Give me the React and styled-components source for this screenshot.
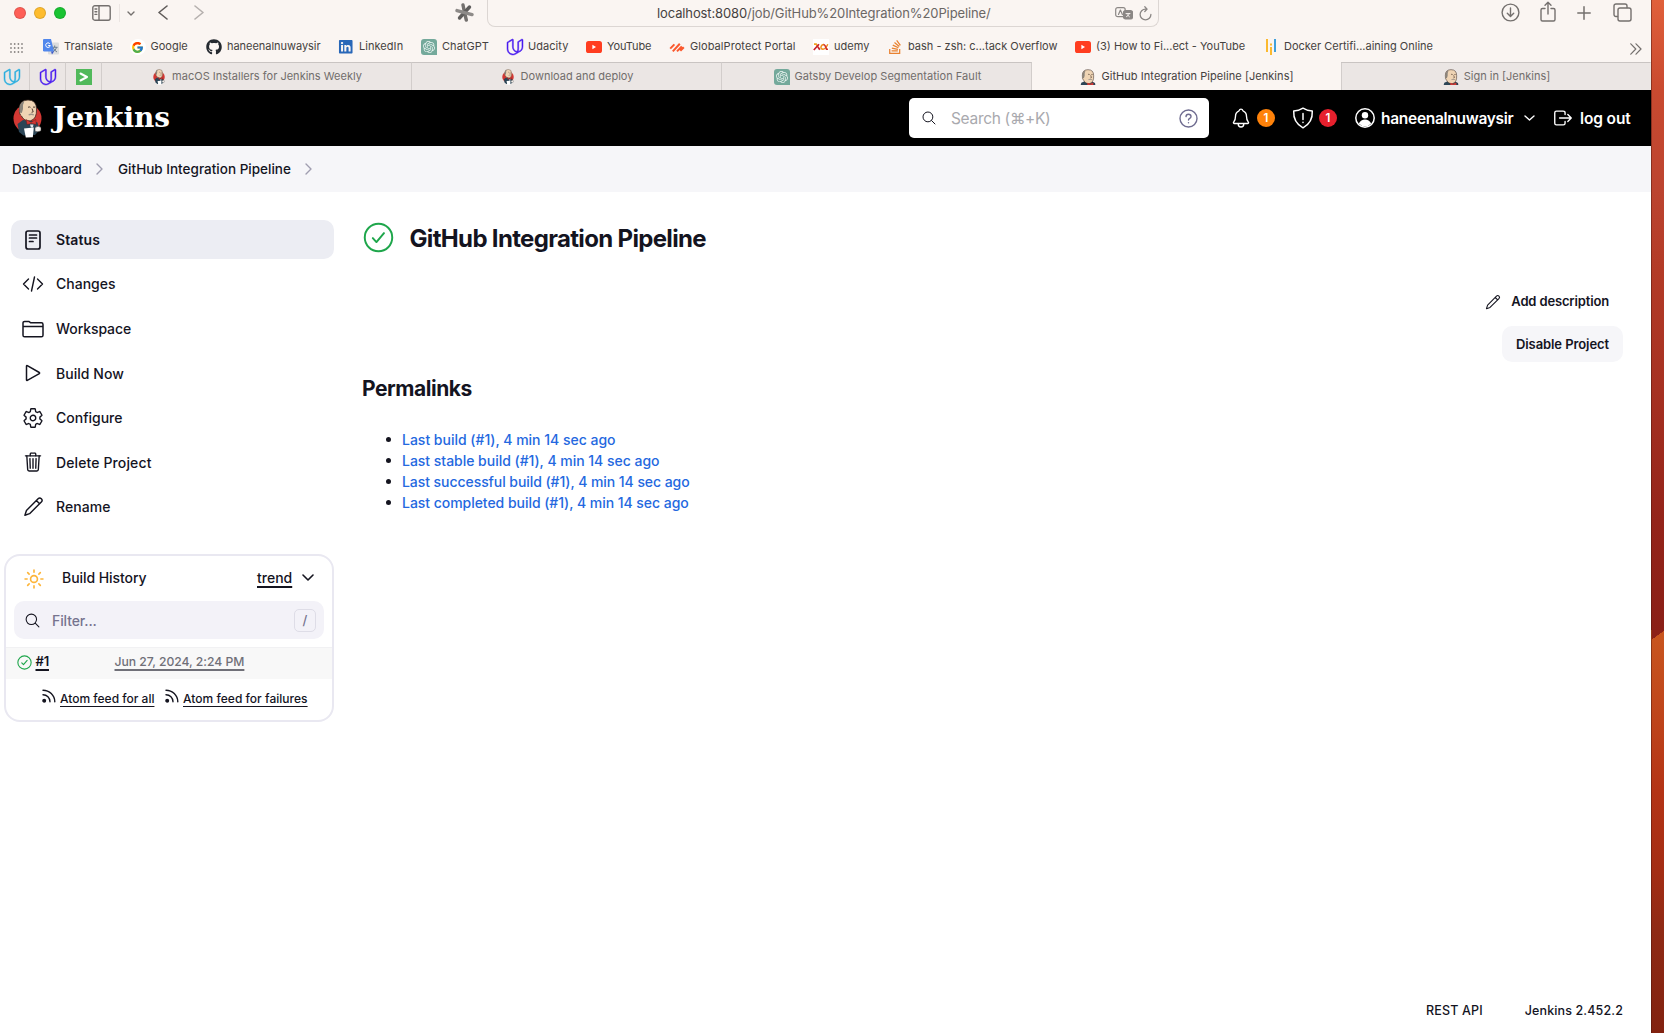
import React from "react";
import styled, { createGlobalStyle } from "styled-components";
import { FcGoogle } from "react-icons/fc";
import { FaGithub, FaLinkedin } from "react-icons/fa";
import { SiStackoverflow, SiOpenai, SiUdacity } from "react-icons/si";
import {
  IoSearchOutline, IoSettingsOutline, IoTrashOutline, IoNotificationsOutline,
  IoSunnyOutline, IoLogOutOutline,
} from "react-icons/io5";

const Global = createGlobalStyle`
  * { box-sizing: border-box; }
  body { margin: 0; background: #fff; font-family: Inter, "Noto Sans", sans-serif; color: #14141f; }
  svg { display: block; flex: none; }
`;

const Desktop = styled.div`
  display: flex; width: 1664px; height: 1033px; overflow: hidden;
`;
const Win = styled.div`
  width: 1651px; height: 1033px; display: flex; flex-direction: column; background: #fff; flex: none;
`;
const Wallpaper = styled.div`
  flex: 1;
  border-left: 1px solid rgba(70, 20, 10, 0.45);
  background:
    linear-gradient(144deg, #8c2018 0 50%, transparent 51%) 0 630px / 100% 10px no-repeat,
    linear-gradient(#e0603a 0, #c94a30 90px, #bc4430 190px, #b33b27 270px, #a63122 390px, #94241a 520px, #8a1f17 630px,
      #c9561f 630px, #be441b 720px, #b43416 790px, #a42d14 870px, #8f2a15 930px, #822210 1033px);
`;
const T = styled.span`
  white-space: nowrap;
  font-size: ${(p) => p.$s}px;
  font-weight: ${(p) => p.$w || 400};
  letter-spacing: ${(p) => p.$ls || 0}px;
  color: ${(p) => p.$c || "inherit"};
  line-height: ${(p) => p.$lh || 1.25};
`;

/* Safari chrome */
const Toolbar = styled.div`
  height: 27px; background: #faf5f2; display: flex; align-items: flex-start; flex: none;
`;
const Slot = styled.div`
  width: ${(p) => p.$w}px; padding-left: ${(p) => p.$l || 0}px; padding-top: ${(p) => p.$t || 0}px; flex: none; display: flex;
`;
const Lights = styled.div`
  display: flex; gap: 8px; padding: 7px 0 0 14px; width: 91px; flex: none;
`;
const Light = styled.i`
  width: 12px; height: 12px; border-radius: 50%; background: ${(p) => p.$c}; border: 1px solid rgba(0, 0, 0, 0.12);
`;
const Divider = styled.i`width: 1px; height: 18px; background: #ebe5e2; margin: 4px 7px 0 -8px; flex: none;`;
const UrlBar = styled.div`
  width: 672px; height: 27px; border: 1px solid #dcd6d3; border-top: 0; border-radius: 0 0 8px 8px;
  display: flex; align-items: center; flex: none; padding: 0 6px 0 169px;
`;
const UrlIcons = styled.div`
  display: flex; gap: 6px; margin-left: auto; align-items: center;
`;
const Bookmarks = styled.div`
  height: 35px; background: #faf5f2; display: flex; flex: none; align-items: center; padding: 5px 0 0 10px;
`;
const GridIcon = styled.div`width: 33px; flex: none; padding-top: 1px;`;
const Bookmark = styled.div`
  width: ${(p) => p.$w}px; flex: none; display: flex; align-items: center; gap: 5px; color: #454240;
  > span { margin-top: -1px; }
`;
const More = styled.div`padding-top: 4px;`;
const IconBox = styled.div`
  width: 16px; height: 16px; display: flex; align-items: center; justify-content: center; flex: none;
  border-radius: ${(p) => p.$r || 0}; background: ${(p) => p.$bg || "transparent"};
`;
const Tabs = styled.div`
  height: 28px; display: flex; flex: none; background: #ebe6e4;
`;
const Pinned = styled.div`
  width: ${(p) => p.$w}px; border-right: 1px solid #d2cdcb; border-top: 1px solid #c9c4c2; flex: none;
  display: flex; align-items: center; padding-left: ${(p) => p.$l}px;
`;
const Tab = styled.div`
  width: ${(p) => (p.$active ? 309 : 310)}px; flex: none;
  display: flex; align-items: center; justify-content: center; gap: 5px; padding-left: ${(p) => (p.$late ? 2 : 0)}px;
  color: ${(p) => (p.$active ? "#45413f" : "#716d6b")};
  background: ${(p) => (p.$active ? "#faf5f2" : "transparent")};
  border-top: 1px solid ${(p) => (p.$active ? "#faf5f2" : "#c9c4c2")};
  border-right: 1px solid ${(p) => (p.$last ? "transparent" : p.$active ? "#faf5f2" : "#d2cdcb")};
  box-shadow: ${(p) => (p.$last ? "inset 1px 0 #d2cdcb" : "none")};
`;

/* Jenkins header */
const Header = styled.header`
  height: 56px; background: #000; color: #fff; display: flex; align-items: center; flex: none; padding: 0 0 0 13px;
`;
const Brand = styled.div`width: 896px; display: flex; align-items: center; flex: none;`;
const Wordmark = styled.span`
  font-family: "DejaVu Serif", "Liberation Serif", serif; font-weight: 700; font-size: 28px; line-height: 32px;
  margin: -1px 0 0 11px; letter-spacing: -0.1px;
`;
const Search = styled.div`
  width: 300px; height: 40px; background: #fff; border-radius: 5px; display: flex; align-items: center; flex: none;
  padding: 0 11px 0 12px; color: #14141f;
`;
const Placeholder = styled.div`flex: 1; padding-left: ${(p) => p.$l}px; margin-top: ${(p) => p.$t || 0}px;`;
const HGroup = styled.div`
  display: flex; align-items: center; gap: ${(p) => p.$g || 5}px; width: ${(p) => p.$w}px; flex: none;
  padding-left: ${(p) => p.$l || 0}px;
`;
const Count = styled.span`
  width: 18px; height: 18px; border-radius: 50%; background: ${(p) => p.$c}; color: #fff; font-size: 11.5px; font-weight: 600;
  display: flex; align-items: center; justify-content: center;
`;
const NavText = styled(T)`margin-top: 1px;`;
const Crumbs = styled.nav`
  height: 46px; background: #f6f6f9; display: flex; align-items: center; flex: none; padding: 0 0 2px 12px;
`;
const CrumbSep = styled.div`width: 36px; padding: 1px 0 0 14px; flex: none;`;
const Crumb = styled.div`width: ${(p) => p.$w}px; flex: none;`;

const Body = styled.div`display: flex; flex: 1; min-height: 0;`;
const Side = styled.aside`width: 334px; flex: none; padding-top: 28px;`;
const Tasks = styled.div`padding-left: 11px; display: flex; flex-direction: column; gap: 5.55px;`;
const Task = styled.div`
  height: 39px; border-radius: 10px; display: flex; align-items: center; padding: 0 0 0 11px; gap: 12px;
  background: ${(p) => (p.$on ? "#ecedf3" : "transparent")};
  > span { margin-top: ${(p) => (p.$dip ? 2 : 0)}px; }
`;
const TaskIcon = styled.div`width: 22px; height: 22px; display: flex; align-items: center; justify-content: center;`;

const Card = styled.section`
  margin: 28px 0 0 4px; height: 168px; border: 2px solid #e9e8f1; border-radius: 16px; display: flex; flex-direction: column;
`;
const CardHead = styled.div`
  height: 45px; display: flex; align-items: center; padding: 0 0 0 17px;
  > span, > div { margin-top: -2px; }
  svg { stroke-width: 1.6px; }
`;
const SunBox = styled.div`&& { margin-top: 0; } svg { stroke-width: 0; stroke: #fdb53a; } svg * { stroke-width: 38px; }`;
const CardTitle = styled.div`width: 212px; padding: 0 0 1px 17px;`;
const Under = styled(T)`
  text-decoration: underline; text-decoration-thickness: ${(p) => p.$th || 1}px; text-underline-offset: ${(p) => p.$off || 3}px;
`;
const Filter = styled.div`
  height: 38px; margin: 0 8px 0 8px; border-radius: 10px; background: #f3f2f8; display: flex; align-items: center; padding: 0 8px 0 10px;
`;
const Slash = styled.div`
  width: 22px; height: 23px; border: 1px solid #dedde7; border-radius: 5px; display: flex; align-items: center; justify-content: center;
  color: #76748f;
`;
const BuildRow = styled.div`
  height: 32px; margin-top: 8px; background: #f8f8f8; border-top: 1px solid #f1f1f3; display: flex; align-items: center; padding: 0 0 3px 10.5px;
`;
const BuildNo = styled.div`width: 83px; padding-left: 4px; margin-top: -4px;`;
const BuildDate = styled.div`margin-top: -5px;`;
const Feeds = styled.div`display: flex; padding: 10px 0 0 36px;`;
const Feed = styled.div`display: flex; gap: 4px; width: ${(p) => p.$w}px;`;
const FeedText = styled.div`margin-top: -2px;`;

const Main = styled.main`flex: 1; display: flex; flex-direction: column; padding: 30px 28px 0 28px;`;
const TitleRow = styled.div`
  display: flex; align-items: center; height: 32px; gap: 16px;
  > svg { margin-left: 0.5px; margin-top: -1px; }
  > span { margin-top: 2px; }
`;
const Actions = styled.div`display: flex; flex-direction: column; align-items: flex-end; margin-top: 38px;`;
const AddDesc = styled.div`display: flex; align-items: center; height: 19px; gap: 10px; padding-right: 14px;`;
const Disable = styled.div`
  margin-top: 15px; width: 121px; height: 36px; border-radius: 10px; background: #f6f6f9; display: flex; align-items: center; justify-content: center;
`;
const H2 = styled.h2`margin: 14px 0 0; font-size: 21px; line-height: 28px; font-weight: 700; display: flex;`;
const Links = styled.ul`margin: 27px 0 0; padding: 0 0 0 40px; list-style: none;`;
const LinkItem = styled.li`
  height: 21px; display: flex; align-items: center; color: #2468e0;
  &::before { content: ""; width: 5px; height: 5px; border-radius: 50%; background: #14141f; margin: 0 11px 0 -16px; }
`;
const Footer = styled.footer`
  margin-top: auto; height: 45px; display: flex; justify-content: flex-end; gap: 42px; align-items: center;
`;

const S = ({ w, h, vb, c = "currentColor", sw = 1.5, children, fill = "none" }) => (
  <svg width={w} height={h || w} viewBox={vb || `0 0 ${w} ${h || w}`} fill={fill} stroke={c} strokeWidth={sw} strokeLinecap="round" strokeLinejoin="round">{children}</svg>
);
const ButlerHead = () => (
  <>
    <path d="M6.500 9.500Q6.500 1 15 1Q23.500 1 23.500 10Q24 20 17.500 21.800Q11 22.500 8.500 17Q6 15.500 6.500 9.500Z" fill="#efd4b4" stroke="#3b2a22" strokeWidth=".8" />
    <path d="M6.600 13.500Q5 4.500 11.500 1.800Q9.500 5.500 10 10L8.800 14Z" fill="#8b847b" />
    <path d="M15 8.300q1.300-.8 2.500 0M20 8.300q1-.7 2 0M19 9.500l1.200 3.300-1.600.5" stroke="#3b2a22" strokeWidth=".9" fill="none" />
    <path d="M15.500 15.200q3-1.600 5.600.3l-.5 1q-2.300-1.100-4.800 0z" fill="#a0958a" />
  </>
);
const Butler = ({ w, h }) => (
  <svg width={w} height={h} viewBox="0 0 29 39">
    <circle cx="14.500" cy="19.500" r="14" fill="#d33833" />
    <path d="M4.500 25L10 21L19 22L24.500 23.500L26.500 31L22 36L10.500 36.500L6 33Z" fill="#2b4556" />
    <ButlerHead />
    <path d="M13 20.500L18 23.300L22.800 20.500L23.200 25.500L18.500 24.600L14 25.500Z" fill="#d33833" stroke="#5a1512" strokeWidth=".4" />
    <path d="M17 25.500h3.500l-.6 3h-2z" fill="#dfe6ea" />
    <path d="M11 29.500L20.800 28.500L19.800 38.200L12.800 38.500Z" fill="#fff" />
    <path d="M22 28.500q3.500-2.500 6 0v3.300q-3 1.800-6 .4z" fill="#f4f1ec" stroke="#2b2b2b" strokeWidth=".5" />
  </svg>
);
const ButlerBust = () => (
  <svg width="16" height="16" viewBox="3 0 24 24">
    <path d="M4 24L5 20.500L10 18.500L22 19L25.500 21L26 24Z" fill="#2b4556" />
    <ButlerHead />
    <path d="M14 20.500L18.500 22L23 20.300V24.500L18.500 23.500L14 24.500Z" fill="#d33833" />
  </svg>
);
const Check = ({ w, sw = 1.9 }) => (
  <S w={w} vb="0 0 30 30" c="#1ea64b" sw={sw}><circle cx="15" cy="15" r="13.300" /><path d="M9.500 15.600l3.500 3.800L20.300 10.800" /></S>
);
const Pencil = ({ w }) => (
  <S w={w} vb="0 0 22 22" sw="1.5"><path d="M2 20.200l1.600-5L15.800 2.900a2.300 2.300 0 0 1 3.400 3.400L6.900 18.500zM14 4.800l3.400 3.400" /></S>
);
const Chevron = ({ w = 7, h = 12, c, sw = 1.4, d = "r" }) => (
  <S w={w} h={h} c={c} sw={sw}><path d={d === "r" ? `M1 1L${w - 1} ${h / 2}L1 ${h - 1}` : d === "l" ? `M${w - 1} 1L1 ${h / 2}L${w - 1} ${h - 1}` : `M1 1L${w / 2} ${h - 1}L${w - 1} 1`} /></S>
);
const Rss = () => (
  <S w={14} sw="1.4"><circle cx="2.200" cy="11.700" r="1.300" fill="currentColor" /><path d="M1 5.800a7 7 0 0 1 7 7M1 1.200A11.800 11.800 0 0 1 12.800 12.800" /></S>
);
const Udacity = styled(SiUdacity).attrs({ size: 16 })`stroke: currentColor; stroke-width: 0.7px; overflow: visible;`;
const YouTube = () => (
  <svg width="16" height="12" viewBox="0 0 16 12"><rect width="16" height="12" rx="2.600" fill="#ff3d20" /><path d="M6.400 3.800v4.400L10 6z" fill="#fff" /></svg>
);
const Gpt = () => <IconBox $bg="#74a99b" $r="3px 3px 0 3px"><SiOpenai size={12} color="#e9f3f0" /></IconBox>;
const TranslateIcon = () => (
  <svg width="16" height="16" viewBox="0 0 16 16">
    <rect x="5" y="3.500" width="11" height="12" rx="1" fill="#dcdcdc" />
    <path d="M11.700 6.500v1.700M9 8.300h5.600M13.600 8.500q-1 3-4 4.600M10.300 9q1.200 2.600 3.700 4" stroke="#6b7d8e" strokeWidth="1" fill="none" />
    <path d="M1 0h7l3 12.500H1.200A1.200 1.200 0 0 1 0 11.300V1a1 1 0 0 1 1-1z" fill="#5187ec" /><path d="M8 12.500h3L9 15.500z" fill="#3a57c9" />
    <path d="M6.800 4.700a2.300 2.300 0 1 0 .5 1.800H5.200" stroke="#fff" strokeWidth="1" fill="none" />
  </svg>
);
const Palo = () => (
  <svg width="16" height="11" viewBox="0 0 16 11"><path d="M1.200 6.600L5.400 2.400M3.800 9.400L10.800 1.800M8 9.400L12.800 4.400M11.300 8.800L14.800 5.200" stroke="#fa582d" strokeWidth="2" /></svg>
);
const Udemy = () => (
  <IconBox $bg="#fff"><svg width="16" height="8" viewBox="0 0 16 8"><path d="M1 1.200h2.200L5 4" stroke="#f0a323" strokeWidth="1.700" fill="none" /><path d="M.8 7L6 1.200M5 4l1.800 2.800" stroke="#c8202c" strokeWidth="1.700" fill="none" /><path d="M14.800 1.200q-2.400 5-4.800 5Q7.600 6 8 3.800 8.500 1.500 11 1.500" stroke="#f0901d" strokeWidth="1.500" fill="none" /><path d="M10.500 1.500q1.800.3 3 4.700h1.500" stroke="#d3302c" strokeWidth="1.500" fill="none" /></svg></IconBox>
);
const DockerCert = () => (
  <svg width="10" height="16" viewBox="0 0 10 16"><path d="M1 0v13M5 4.500v2M5 8v8" stroke="#fbb92f" strokeWidth="2" /><path d="M9 0v13" stroke="#3fa0dc" strokeWidth="2" /></svg>
);

const marks = [
  ["Translate", 86.5, <TranslateIcon />, 0.1],
  ["Google", 76.5, <IconBox $bg="#fff" $r="50%"><FcGoogle size={13} /></IconBox>, 0],
  ["haneenalnuwaysir", 132, <FaGithub size={16} color="#24292f" />, -0.04],
  ["LinkedIn", 83, <IconBox><FaLinkedin size={15.5} color="#2867b8" /></IconBox>, 0.05],
  ["ChatGPT", 86, <Gpt />, 0.05],
  ["Udacity", 79, <Udacity color="#4a1cf0" />, 0.05],
  ["YouTube", 83, <IconBox><YouTube /></IconBox>, -0.1],
  ["GlobalProtect Portal", 144, <IconBox><Palo /></IconBox>, 0.07],
  ["udemy", 74, <Udemy />, 0],
  ["bash - zsh: c...tack Overflow", 188, <IconBox><SiStackoverflow size={14} color="#e9812f" /></IconBox>, 0],
  ["(3) How to Fi...ect - YouTube", 188, <IconBox><YouTube /></IconBox>, 0],
  ["Docker Certifi...aining Online", 367, <IconBox><DockerCert /></IconBox>, 0],
];
const tabs = [
  ["macOS Installers for Jenkins Weekly", <IconBox><Butler w={12} h={16} /></IconBox>, 0.01],
  ["Download and deploy", <IconBox><Butler w={12} h={16} /></IconBox>, 0],
  ["Gatsby Develop Segmentation Fault", <Gpt />, 0.04],
  ["GitHub Integration Pipeline [Jenkins]", <IconBox><ButlerBust /></IconBox>, 0.05],
  ["Sign in [Jenkins]", <IconBox><ButlerBust /></IconBox>, 0],
];
const tasks = [
  ["Status", 0.12, <S w={16} h={20} sw="1.7"><rect x="1" y="1" width="14" height="18" rx="2" /><path d="M4.500 5h7M4.500 8h7M4.500 11.500h3.500" /></S>],
  ["Changes", 0, <S w={22} h={16} sw="1.400"><path d="M6.500 3L1.500 8l5 5M15.500 3l5 5-5 5M12.500 1L9.500 15" /></S>],
  ["Workspace", -0.08, <S w={22} h={18} sw="1.500"><path d="M1 15.200V3a1.600 1.600 0 0 1 1.600-1.600h4.200l2 1.400h10.600A1.600 1.600 0 0 1 21 4.400v10.800a1.600 1.600 0 0 1-1.600 1.600H2.600A1.600 1.600 0 0 1 1 15.200zM1 6.500h20" /></S>],
  ["Build Now", 0.05, <S w={16} h={18} sw="1.500"><path d="M1.500 2.200v13.600q0 .9.800.5L14.300 9.600q.7-.6 0-1.100L2.300 1.700q-.8-.4-.8.500z" /></S>],
  ["Configure", 0, <IoSettingsOutline size={22} />],
  ["Delete Project", 0.12, <IoTrashOutline size={22} />],
  ["Rename", 0.05, <Pencil w={21} />],
];
const links = [
  ["Last build (#1), 4 min 14 sec ago", -0.01],
  ["Last stable build (#1), 4 min 14 sec ago", -0.02],
  ["Last successful build (#1), 4 min 14 sec ago", -0.06],
  ["Last completed build (#1), 4 min 14 sec ago", -0.04],
];

export default function App() {
  return (
    <Desktop>
      <Global />
      <Win>
        <Toolbar>
          <Lights><Light $c="#fe5f57" /><Light $c="#febc2e" /><Light $c="#19c332" /></Lights>
          <Slot $w={36} $l={1} $t={5}>
            <S w={19} h={16} c="#74706e" sw="1.400"><rect x=".8" y=".8" width="17.400" height="14.400" rx="2" /><path d="M7 1v14M3 4h1.800M3 6.700h1.800M3 9.400h1.800" /></S>
          </Slot>
          <Divider />
          <Slot $w={30} $t={11}><Chevron w={8} h={5} d="d" c="#74706e" /></Slot>
          <Slot $w={36} $l={1} $t={5}><Chevron w={10} h={15} d="l" c="#5f5b59" sw={1.6} /></Slot>
          <Slot $w={261} $l={1} $t={5}><Chevron w={10} h={15} c="#b5b0ae" sw={1.6} /></Slot>
          <Slot $w={33} $l={1} $t={3}>
            <S w={19} c="#73706e" sw="3.400"><path d="M9.500 9.500L11.300 17M9.500 9.500L8 2" /><path d="M14.500 4L4.500 15" stroke="#5f5d5c" /><path d="M2 7.600L17 11.600" stroke="#8d8a88" /></S>
          </Slot>
          <UrlBar>
            <T $s={13} $ls={-0.12} $c="#454240">localhost:8080</T>
            <T $s={13} $ls={-0.11} $c="#6b6765">/job/GitHub%20Integration%20Pipeline/</T>
            <UrlIcons>
              <S w={18} h={13} c="#8b8785" sw="1.200"><rect x=".7" y=".7" width="9.500" height="9" rx="2" /><path d="M3.500 7.500L5.400 3l2 4.500" /><rect x="8.500" y="3.500" width="9" height="8.500" rx="2" fill="#8b8785" /><path d="M11 6.500h4M14.500 6.500q-1 2.500-3 3.200M12 7.500l2.500 2.300" stroke="#faf5f2" strokeWidth=".9" /></S>
              <S w={13} h={15} c="#8b8785" sw="1.300"><path d="M11.900 8.500a5.400 5.400 0 1 1-5.400-5.400h1.200M5.800.8l2.300 2.300-2.300 2.400" /></S>
            </UrlIcons>
          </UrlBar>
          <Slot $w={381} $l={342} $t={3}>
            <S w={19} c="#74706e" sw="1.400"><circle cx="9.500" cy="9.500" r="8.400" /><path d="M9.500 5v8.300M6.300 10.300l3.200 3.200 3.200-3.200" /></S>
          </Slot>
          <Slot $w={36} $t={1}><S w={16} h={21} c="#74706e" sw="1.400"><path d="M5 7.500H2.500A1.500 1.500 0 0 0 1 9v9.500A1.500 1.500 0 0 0 2.500 20h11a1.500 1.500 0 0 0 1.500-1.500V9a1.500 1.500 0 0 0-1.500-1.500H11M8 13V1.500M5 4.200L8 1.300l3 2.900" /></S></Slot>
          <Slot $w={36} $l={1} $t={6}><S w={14} c="#74706e"><path d="M7 .8v12.400M.8 7h12.400" /></S></Slot>
          <Slot $w={20} $l={1} $t={3}><S w={19} c="#74706e" sw="1.400"><rect x="5" y="5" width="13" height="13" rx="2" /><path d="M4.500 13.500H3a2 2 0 0 1-2-2V3a2 2 0 0 1 2-2h9a2 2 0 0 1 2 2v1.500" /></S></Slot>
        </Toolbar>
        <Bookmarks>
          <GridIcon><S w={13} h={10} c="#8a8684" sw="1.800"><path d="M1 1h0M4.700 1h0M8.400 1h0M12 1h0M1 5h0M4.700 5h0M8.400 5h0M12 5h0M1 9h0M4.700 9h0M8.400 9h0M12 9h0" /></S></GridIcon>
          {marks.map(([t, w, icon, ls]) => <Bookmark key={t} $w={w}>{icon}<T $s={11} $ls={ls}>{t}</T></Bookmark>)}
          <More><S w={12} c="#74706e" sw="1.200"><path d="M.8.8L5.800 6l-5 5.200M6 .8L11 6l-5 5.200" /></S></More>
        </Bookmarks>
        <Tabs>
          <Pinned $w={30} $l={4}><Udacity color="#2aaedf" /></Pinned>
          <Pinned $w={36} $l={10}><Udacity color="#4a1cf0" /></Pinned>
          <Pinned $w={36} $l={10}><IconBox $bg="#51b95b"><S w={10} h={10} c="#fff" sw="2"><path d="M1.500 1.500L8 5 1.500 8.500" /></S></IconBox></Pinned>
          {tabs.map(([t, icon, ls], i) => <Tab key={t} $active={i === 3} $last={i === 4} $late={i > 1}>{icon}<T $s={11} $ls={ls}>{t}</T></Tab>)}
        </Tabs>
        <Header>
          <Brand>
            <Butler w={29} h={39} />
            <Wordmark>Jenkins</Wordmark>
          </Brand>
          <Search>
            <IoSearchOutline size={16} />
            <Placeholder $l={14}><T $s={15.5} $ls={-0.32} $c="#a9a9ae">Search (⌘+K)</T></Placeholder>
            <S w={19} c="#6f6c90" sw="1.400"><circle cx="9.500" cy="9.500" r="8.500" /><path d="M7 7.600q.1-2.400 2.500-2.400T12 7.400q0 1.300-1.300 2-1.200.7-1.200 1.700M9.500 13.600v.1" /></S>
          </Search>
          <HGroup $l={21} $w={83} $g={5}><IoNotificationsOutline size={22} /><Count $c="#fe820a">1</Count></HGroup>
          <HGroup $w={63}><S w={22} sw="1.500"><path d="M11 1.200q4 2.600 9.300 2.800.6 11.500-9.300 16.800Q1.100 15.500 1.700 4 7 3.800 11 1.200zM11 6.500v6M11 15.300v.1" /></S><Count $c="#e6202d">1</Count></HGroup>
          <HGroup $w={169} $g={6}>
            <svg width="20" height="20" viewBox="0 0 20 20"><circle cx="10" cy="10" r="9.200" fill="none" stroke="#fff" strokeWidth="1.500" /><circle cx="10" cy="7.300" r="3.200" fill="#fff" /><path d="M3.800 15.500Q6 11.600 10 11.600t6.200 3.900Q13.500 18.500 10 18.500t-6.200-3z" fill="#fff" /></svg>
            <NavText $s={15.5} $w={600} $ls={-0.29}>haneenalnuwaysir</NavText>
          </HGroup>
          <HGroup $w={28}><Chevron w={11} h={6} d="d" /></HGroup>
          <HGroup $w={80} $g={6}><IoLogOutOutline size={22} /><NavText $s={15.5} $w={600} $ls={-0.12}>log out</NavText></HGroup>
        </Header>
        <Crumbs>
          <Crumb $w={70}><T $s={13.5} $w={500} $ls={-0.07}>Dashboard</T></Crumb>
          <CrumbSep><Chevron c="#a09eb0" /></CrumbSep>
          <Crumb $w={173}><T $s={13.5} $w={500} $ls={0.01}>GitHub Integration Pipeline</T></Crumb>
          <CrumbSep><Chevron c="#a09eb0" /></CrumbSep>
        </Crumbs>
        <Body>
          <Side>
            <Tasks>
              {tasks.map(([t, ls, icon], i) => <Task key={t} $on={i === 0} $dip={i === 3 || i === 5}><TaskIcon>{icon}</TaskIcon><T $s={14} $ls={ls} $w={i ? 500 : 600}>{t}</T></Task>)}
            </Tasks>
            <Card>
              <CardHead>
                <SunBox><IoSunnyOutline size={22} color="#fdb53a" /></SunBox>
                <CardTitle><T $s={14} $w={500} $ls={-0.06}>Build History</T></CardTitle>
                <Under $s={14} $w={500} $th={2}>trend</Under>
                <Slot $w={22} $l={10}><Chevron w={12} h={7} d="d" sw={1.6} /></Slot>
              </CardHead>
              <Filter>
                <IoSearchOutline size={17} />
                <Placeholder $l={11} $t={-1}><T $s={14} $w={500} $ls={-0.1} $c="#76748f">Filter...</T></Placeholder>
                <Slash><T $s={13} $w={500}>/</T></Slash>
              </Filter>
              <BuildRow>
                <Check w={15} sw={2.2} />
                <BuildNo><Under $s={13} $w={600} $th={2} $ls={-0.2}>#1</Under></BuildNo>
                <BuildDate><Under $s={12.2} $w={500} $th={2} $ls={-0.03} $c="#707078">Jun 27, 2024, 2:24 PM</Under></BuildDate>
              </BuildRow>
              <Feeds>
                <Feed $w={123}><Rss /><FeedText><Under $s={12} $w={500}>Atom feed for all</Under></FeedText></Feed>
                <Feed $w={150}><Rss /><FeedText><Under $s={12} $w={500} $ls={0.03}>Atom feed for failures</Under></FeedText></Feed>
              </Feeds>
            </Card>
          </Side>
          <Main>
            <TitleRow><Check w={31} /><T $s={24} $w={700} $ls={-0.67}>GitHub Integration Pipeline</T></TitleRow>
            <Actions>
              <AddDesc><Pencil w={16} /><T $s={13} $w={600} $ls={-0.15}>Add description</T></AddDesc>
              <Disable><T $s={13} $w={600} $ls={-0.08}>Disable Project</T></Disable>
            </Actions>
            <H2><T $s={21} $w={700} $ls={-0.45}>Permalinks</T></H2>
            <Links>{links.map(([l, ls]) => <LinkItem key={l}><T $s={14} $w={500} $ls={ls}>{l}</T></LinkItem>)}</Links>
            <Footer><T $s={12.5} $w={500} $ls={0.17}>REST API</T><T $s={12.5} $w={500} $ls={0.12}>Jenkins 2.452.2</T></Footer>
          </Main>
        </Body>
      </Win>
      <Wallpaper />
    </Desktop>
  );
}
